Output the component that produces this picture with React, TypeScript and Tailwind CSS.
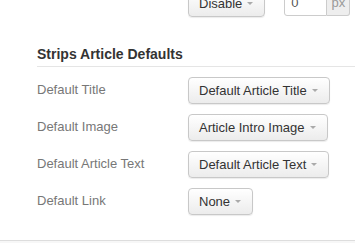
import React from "react";

function Caret() {
  return (
    <span className="ml-[5px] inline-block h-0 w-0 border-l-[3px] border-r-[3px] border-t-[3px] border-l-transparent border-r-transparent border-t-[#aaaaaa]" />
  );
}

function SelectBtn({ label }: { label: string }) {
  return (
    <div className="flex h-[27px] shrink-0 items-center rounded-[4px] border border-[#c8c8c8] bg-gradient-to-b from-[#ffffff] to-[#ececec] pl-[10px] pr-[11px] text-[13px] leading-[18px] text-[#333333] shadow-[0_1px_1px_rgba(0,0,0,0.08)]">
      <span>{label}</span>
      <Caret />
    </div>
  );
}

function Row({ label, value }: { label: string; value: string }) {
  return (
    <div className="flex">
      <div className="w-[188px] shrink-0 pl-[37px] pt-[4px] text-[13px] leading-[18px] text-[#777777]">{label}</div>
      <SelectBtn label={value} />
    </div>
  );
}

export default function App() {
  return (
    <div
      className="relative flex h-[243px] w-[355px] flex-col overflow-hidden bg-white"
      style={{ fontFamily: '"Liberation Sans", Arial, sans-serif' }}
    >
      <div className="-mt-[10px] flex pl-[188px]">
        <SelectBtn label="Disable" />
        <div className="ml-[19px] flex h-[26px]">
          <div className="flex w-[43px] items-center rounded-l-[3px] border border-[#cccccc] bg-white pl-[6px] text-[13px] text-[#555555]">
            0
          </div>
          <div className="flex w-[23px] items-center justify-center rounded-r-[3px] border border-l-0 border-[#cccccc] bg-[#eeeeee] text-[13px] text-[#999999]">
            px
          </div>
        </div>
      </div>

      <div className="ml-[37px] mt-[27px] border-b border-[#e5e5e5] pb-[2px] text-[14px] font-bold leading-[20px] text-[#333333]">
        Strips Article Defaults
      </div>

      <div className="mt-[10px] flex flex-col gap-[10px]">
        <Row label="Default Title" value="Default Article Title" />
        <Row label="Default Image" value="Article Intro Image" />
        <Row label="Default Article Text" value="Default Article Text" />
        <Row label="Default Link" value="None" />
      </div>

      <div className="mt-[25px] h-[3px] shrink-0 border-t border-[#dddddd] bg-[#f7f7f7]" />
    </div>
  );
}
